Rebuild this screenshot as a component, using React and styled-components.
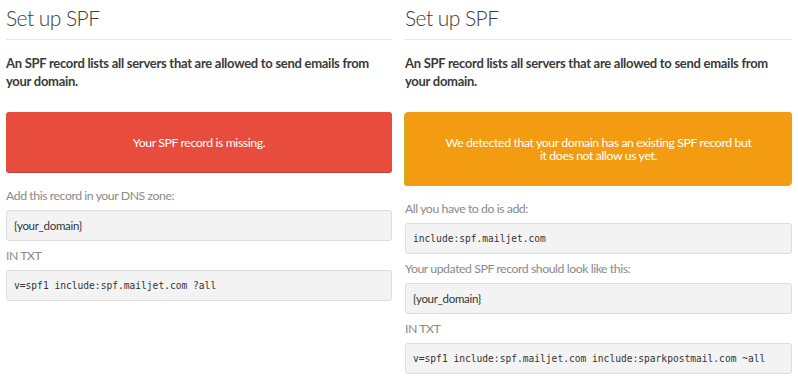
import styled, { createGlobalStyle } from "styled-components";

const Global = createGlobalStyle`
  * { box-sizing: border-box; }
  body {
    margin: 0;
    background: #fff;
    font-family: Lato, "Open Sans", sans-serif;
  }
`

const Page = styled.div`
  display: grid;
  grid-template-columns: 386px 387px;
  column-gap: 13px;
  padding: 0 6px;
`

const Column = styled.section`
  display: flex;
  flex-direction: column;
`

const Title = styled.h2`
  margin: 0;
  padding: 5px 0 9px;
  font-size: 21px;
  letter-spacing: -0.55px;
  line-height: 25px;
  font-weight: 300;
  color: #3c3c3c;
  border-bottom: 1px solid #e6e6e6;
`

const Intro = styled.p`
  margin: 14px 0 0;
  font-size: 13px;
  letter-spacing: -0.28px;
  line-height: 18px;
  font-weight: 700;
  color: #3a3a3a;
`

const Alert = styled.div`
  margin-top: 22px;
  margin-bottom: 15px;
  min-height: ${p => p.$tall ? "73px" : "60px"};
  display: flex;
  align-items: center;
  justify-content: center;
  padding: 0 36px;
  text-align: center;
  font-size: 12.3px;
  letter-spacing: -0.4px;
  line-height: 13px;
  color: #fff;
  border-radius: 3px;
  background: ${p => p.$tone === "warning" ? "#f39c12" : "#e74c3c"};
  box-shadow: ${p => p.$tone === "warning"
    ? "-1px 1px 0 #b9b820"
    : "0 1px 0 #b5463a"};
`

const Label = styled.div`
  font-size: 12.3px;
  letter-spacing: -0.45px;
  line-height: 18px;
  font-weight: 400;
  color: #8a8a8a;
  margin-bottom: 5px;
`

const Field = styled.div`
  height: 31px;
  display: flex;
  align-items: center;
  padding: 0 7px;
  margin-bottom: 6px;
  background: #f3f3f3;
  border: 1px solid #ddd;
  border-radius: 3px;
  color: #333;
  font-size: ${p => p.$mono ? "9.6px" : "11.5px"};
  letter-spacing: ${p => p.$mono ? "0" : "-0.3px"};
  font-family: ${p => p.$mono ? '"DejaVu Sans Mono", "Liberation Mono", monospace' : 'inherit'};
  white-space: pre;
`

export default function App() {
  return (
    <>
      <Global />
      <Page>
        <Column>
          <Title>Set up SPF</Title>
          <Intro>An SPF record lists all servers that are allowed to send emails from your domain.</Intro>
          <Alert $tone="danger">Your SPF record is missing.</Alert>
          <Label>Add this record in your DNS zone:</Label>
          <Field>{"{your_domain}"}</Field>
          <Label>IN TXT</Label>
          <Field $mono>v=spf1 include:spf.mailjet.com ?all</Field>
        </Column>
        <Column>
          <Title>Set up SPF</Title>
          <Intro>An SPF record lists all servers that are allowed to send emails from your domain.</Intro>
          <Alert $tone="warning" $tall>We detected that your domain has an existing SPF record but it does not allow us yet.</Alert>
          <Label>All you have to do is add:</Label>
          <Field $mono>include:spf.mailjet.com</Field>
          <Label>Your updated SPF record should look like this:</Label>
          <Field>{"{your_domain}"}</Field>
          <Label>IN TXT</Label>
          <Field $mono>v=spf1 include:spf.mailjet.com include:sparkpostmail.com ~all</Field>
        </Column>
      </Page>
    </>
  )
}
